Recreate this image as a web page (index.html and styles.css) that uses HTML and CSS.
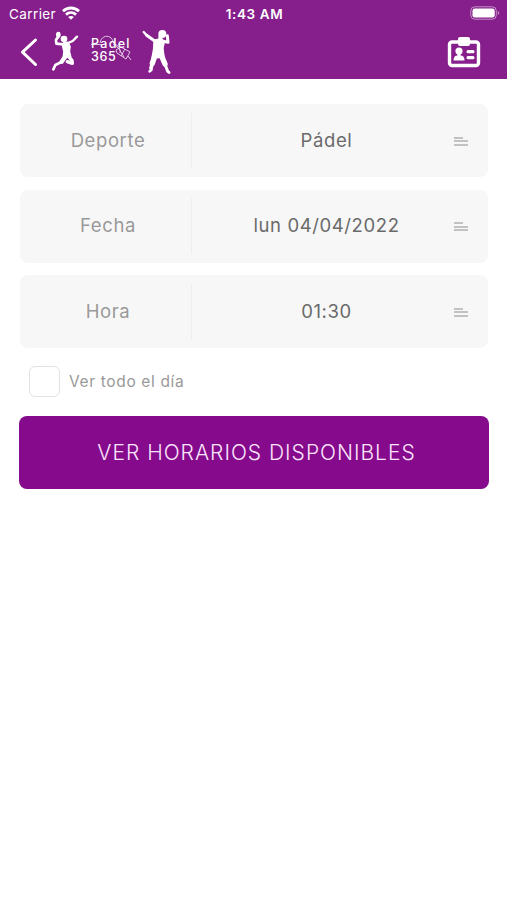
FILE: index.html
```html
<!DOCTYPE html>
<html lang="es">
<head>
  <meta charset="UTF-8">
  <meta name="viewport" content="width=device-width, initial-scale=1.0">
  <title>Padel 365</title>
  <link rel="stylesheet" href="styles.css">
</head>
<body>
  <!-- Header -->
  <header>
    <div class="status-bar">
      <div class="carrier">
        <span>Carrier</span>
        <svg class="wifi" viewBox="0 0 18 14" fill="none" stroke="#fff" stroke-width="2.8">
          <path d="M1 5.2C5.500.9 12.500.9 17 5.200"/>
          <path d="M4 8.600c2.900-2.600 7.100-2.600 10 0"/>
          <path d="M9 13.800l-2.900-2.900c1.500-1.300 4.300-1.300 5.800 0z" fill="#fff" stroke="none"/>
        </svg>
      </div>
      <span class="clock">1:43 AM</span>
      <svg class="battery" viewBox="0 0 30 14">
        <rect x=".8" y=".8" width="25.500" height="12.400" rx="4" fill="none" stroke="#fff" stroke-opacity=".5"/>
        <rect x="2.500" y="2.500" width="22.200" height="9" rx="2.200" fill="#fff"/>
        <path d="M27.800 5v4q1.500-.8 1.500-2t-1.500-2z" fill="#fff" fill-opacity=".5"/>
      </svg>
    </div>
    <div class="nav-bar">
      <svg class="back" viewBox="0 0 18 30" fill="none" stroke="#fff" stroke-width="3" stroke-linecap="round" stroke-linejoin="round">
        <path d="M15.500 3L2.500 15.200l13 12.300"/>
      </svg>
      <!-- Jumping player -->
      <svg class="player" viewBox="0 0 108 150" fill="none" stroke="#fff" stroke-linecap="round" stroke-linejoin="round">
        <ellipse cx="37" cy="26" rx="7" ry="9" fill="#fff" stroke="none"/>
        <ellipse cx="54" cy="39" rx="10" ry="9.500" fill="#fff" stroke="none"/>
        <path d="M36 34l-6 7 1 12 21 2" stroke-width="8"/>
        <path d="M64 52l16-7 13-13" stroke-width="7"/>
        <path d="M54 48l12 2 6 12-2 14 4 16-22 4 2-20-4-16z" fill="#fff" stroke-width="5"/>
        <path d="M66 90l12 13 1 9-15-5" stroke-width="10"/>
        <path d="M59 90l-12 17" stroke-width="13"/>
        <path d="M46 108l-18 9-6 13" stroke-width="8"/>
      </svg>
      <div class="logo">
        <span>Padel</span>
        <span>365</span>
        <svg class="logo-racket" viewBox="0 0 42 28" fill="none" stroke="#fff" stroke-width="1">
          <path d="M9 9C10 3 15 1 19 3c4 3 4 9 8 11M0 10.500h11M22 10c4 0 8 4 7 9"/>
          <path d="M25 16l5-3 9 5-4 7-9-6z M28 15l5 8M34 15l-4 7M37 22l3 4"/>
        </svg>
      </div>
      <!-- Serving player -->
      <svg class="player" viewBox="0 0 108 150" fill="none" stroke="#fff" stroke-linecap="round" stroke-linejoin="round">
        <ellipse cx="67" cy="24" rx="12" ry="12" fill="#fff" stroke="none"/>
        <path d="M11 18l9 10" stroke-width="7"/>
        <path d="M20 28l24 17" stroke-width="9"/>
        <path d="M66 45l18 4-2-20" stroke-width="9"/>
        <path d="M61 32v12" stroke-width="12"/>
        <path d="M43 43l22-3 7 8-4 18 3 26-34 4 5-29z" fill="#fff" stroke-width="6"/>
        <path d="M45 88l-8 24" stroke-width="16"/>
        <path d="M37 112l-4 15" stroke-width="11"/>
        <path d="M33 125l1 7-5 4" stroke-width="8"/>
        <path d="M63 86l12 28" stroke-width="16"/>
        <path d="M75 115l8 21 4 3" stroke-width="9"/>
      </svg>
      <svg class="badge-icon" viewBox="0 0 34 32" fill="#fff">
        <rect x="2.500" y="6" width="29" height="23.500" rx="2.500" fill="none" stroke="#fff" stroke-width="3.400"/>
        <rect x="11" y="1" width="12" height="9" rx="2"/>
        <circle cx="12" cy="15" r="3.600"/>
        <path d="M6.500 24.500q0-5 4-5l-.5-3h4l-.5 3q4 0 4 5z"/>
        <rect x="19.500" y="14" width="8" height="3.200" rx="1.500"/>
        <rect x="19.500" y="20" width="8" height="3.200" rx="1.500"/>
      </svg>
    </div>
  </header>

  <!-- Search form -->
  <main>
    <div class="fields">
      <div class="field">
        <span class="label">Deporte</span>
        <span class="value">Pádel</span>
        <span class="lines"><i></i><i></i><i></i></span>
      </div>
      <div class="field">
        <span class="label">Fecha</span>
        <span class="value">lun 04/04/2022</span>
        <span class="lines"><i></i><i></i><i></i></span>
      </div>
      <div class="field">
        <span class="label">Hora</span>
        <span class="value">01:30</span>
        <span class="lines"><i></i><i></i><i></i></span>
      </div>
    </div>
    <div class="all-day">
      <span class="checkbox"></span>
      <span>Ver todo el día</span>
    </div>
    <button class="submit-btn">VER HORARIOS DISPONIBLES</button>
  </main>
</body>
</html>
```

FILE: styles.css
```css
/* General Styles */
* {
  box-sizing: border-box;
}

body {
  margin: 0;
  background: #fff;
  font-family: Inter, 'Liberation Sans', sans-serif;
}

/* Header */
header {
  height: 79px;
  background: #861f8b;
  color: #fff;
}

.status-bar {
  display: grid;
  grid-template-columns: 1fr auto 1fr;
  align-items: center;
  height: 27px;
  padding: 0 7px 0 9px;
  font-size: 13.5px;
}

.carrier {
  display: flex;
  align-items: center;
  gap: 6px;
  letter-spacing: 0.4px;
}

.wifi {
  width: 18px;
  height: 14px;
  margin-top: -2px;
}

.clock {
  font-weight: 600;
  letter-spacing: 0.6px;
}

.battery {
  width: 30px;
  height: 14px;
  margin-top: -1px;
  justify-self: end;
}

/* Navigation */
.nav-bar {
  display: flex;
  align-items: center;
  height: 50px;
  padding: 0 26px 0 20px;
}

.back {
  width: 18px;
  height: 30px;
  margin-right: 8px;
}

.player {
  width: 36px;
  height: 50px;
  margin-top: -2px;
}

.logo {
  position: relative;
  display: flex;
  flex-direction: column;
  width: 58px;
  height: 27px;
  margin-top: -3px;
  padding-left: 9px;
  font-size: 12.5px;
  font-weight: 500;
  line-height: 13px;
  letter-spacing: 1.3px;
}

.logo span + span {
  letter-spacing: 0.6px;
}

.logo-racket {
  position: absolute;
  left: 9px;
  top: -3px;
  width: 42px;
  height: 28px;
  opacity: 0.75;
}

.badge-icon {
  width: 34px;
  height: 32px;
  margin-left: auto;
}

/* Fields */
main {
  padding: 25px 19px 0 20px;
}

.fields {
  display: grid;
  gap: 12.5px;
}

.field {
  display: grid;
  grid-template-columns: 172px 1fr 54px;
  align-items: center;
  height: 73px;
  padding: 8px 0;
  border-radius: 8px;
  background: #f7f7f7;
  font-size: 18.5px;
  letter-spacing: 0.6px;
  text-align: center;
}

.label,
.value {
  height: 56px;
  line-height: 54px;
}

.label {
  padding-left: 5px;
  border-right: 1px solid #eee;
  color: #999;
}

.value {
  padding-left: 27px;
  color: #6a6a6a;
}

.lines {
  display: grid;
  gap: 1.5px;
  width: 14px;
  margin: 1px 0 0 20px;
}

.lines i {
  height: 2px;
  background: #c2c2c2;
}

.lines i:first-child {
  width: 9px;
}

/* All day option */
.all-day {
  display: flex;
  align-items: center;
  gap: 9px;
  margin: 18px 0 0 9px;
  color: #999;
  font-size: 15.5px;
  letter-spacing: 0.65px;
}

.checkbox {
  width: 31px;
  height: 31px;
  border: 1.5px solid #e2e2e2;
  border-radius: 6px;
}

/* Submit */
.submit-btn {
  display: block;
  width: 470px;
  height: 73px;
  margin: 19px 0 0 -1px;
  padding: 0 0 0 5px;
  border: none;
  border-radius: 8px;
  background: #850b8c;
  color: #fbe4fc;
  font-family: inherit;
  font-size: 21px;
  font-weight: 300;
  letter-spacing: 1px;
}
```
